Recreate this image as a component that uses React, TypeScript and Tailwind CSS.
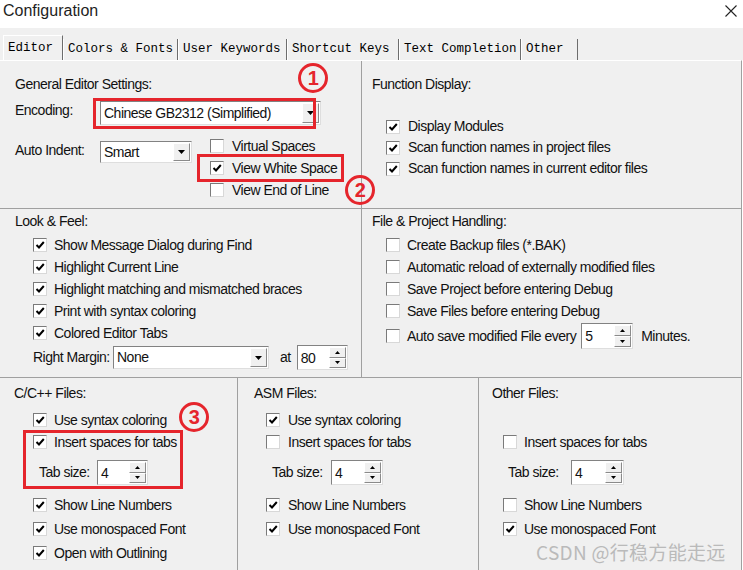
import type { ReactNode } from 'react';

const FONT = "font-['Liberation_Sans',Arial,sans-serif]";

function Box({ checked }: { checked?: boolean }) {
  return (
    <span className="flex h-[14px] w-[14px] shrink-0 items-center justify-center border border-t-[#7a7a7a] border-l-[#7a7a7a] border-b-[#d8d8d8] border-r-[#d8d8d8] bg-white">
      {checked && (
        <svg width="10" height="10" viewBox="0 0 10 10">
          <path d="M1.5 5 L4 7.5 L8.8 2" fill="none" stroke="#000" strokeWidth="2" />
        </svg>
      )}
    </span>
  );
}

function Check({ checked, label, h = 'h-[22px]', gap = 'gap-[7px]' }: { checked?: boolean; label: string; h?: string; gap?: string }) {
  return (
    <div className={`flex items-center ${h} ${gap}`}>
      <Box checked={checked} />
      <span className="whitespace-nowrap">{label}</span>
    </div>
  );
}

function Arrow({ w = 7, h = 4 }: { w?: number; h?: number }) {
  return (
    <svg width={w} height={h} viewBox={`0 0 ${w} ${h}`}>
      <path d={`M0 0 H${w} L${w / 2} ${h} Z`} fill="#000" />
    </svg>
  );
}

function Select({ value, w, h }: { value: string; w: string; h: string }) {
  return (
    <div className={`flex ${w} ${h} items-stretch border border-t-[#828282] border-l-[#828282] border-b-[#dedede] border-r-[#dedede] bg-white p-[1px]`}>
      <span className="flex flex-1 items-center pl-[2px] whitespace-nowrap">{value}</span>
      <span className="flex w-[17px] items-center justify-center border border-t-white border-l-white border-b-[#8a8a8a] border-r-[#8a8a8a] bg-[#f0f0f0]">
        <Arrow />
      </span>
    </div>
  );
}

function Spin({ value, w = 'w-[51px]', h = 'h-[25px]' }: { value: string; w?: string; h?: string }) {
  return (
    <div className={`flex ${w} ${h} border border-t-[#828282] border-l-[#828282] border-b-[#dedede] border-r-[#dedede] bg-white p-[1px]`}>
      <span className="flex flex-1 items-center pl-[2px] leading-none">{value}</span>
      <span className="flex w-[17px] flex-col">
        <span className="flex flex-1 items-center justify-center border border-t-white border-l-white border-b-[#8a8a8a] border-r-[#8a8a8a] bg-[#f0f0f0]">
          <svg width="5" height="3" viewBox="0 0 5 3"><path d="M0 3 H5 L2.5 0 Z" fill="#000" /></svg>
        </span>
        <span className="flex flex-1 items-center justify-center border border-t-white border-l-white border-b-[#8a8a8a] border-r-[#8a8a8a] bg-[#f0f0f0]">
          <Arrow w={5} h={3} />
        </span>
      </span>
    </div>
  );
}

function Label({ children }: { children: ReactNode }) {
  return <div className="h-[17px] leading-[17px] whitespace-nowrap">{children}</div>;
}

function Circle({ n, className }: { n: string; className: string }) {
  return (
    <div className={`absolute flex h-[30px] w-[30px] items-center justify-center rounded-full border-[3px] border-[#e5252c] text-[20px] font-bold leading-none text-[#e5252c] ${className}`}>
      {n}
    </div>
  );
}

const tabs = [
  { t: 'Colors & Fonts', w: 'w-[115px]' },
  { t: 'User Keywords', w: 'w-[109px]' },
  { t: 'Shortcut Keys', w: 'w-[112px]' },
  { t: 'Text Completion', w: 'w-[122px]' },
  { t: 'Other', w: 'w-[57px]' },
];

export default function App() {
  return (
    <div className={`relative h-[570px] w-[743px] overflow-hidden bg-white text-[14px] tracking-[-0.5px] text-[#111] ${FONT}`}>
      {/* title bar */}
      <div className="flex h-[28px] items-start justify-between pl-[3px] pr-[5px] pt-[1px]">
        <span className="text-[16px] leading-[19px] tracking-normal text-[#1e1e1e]">Configuration</span>
        <svg width="12" height="12" viewBox="0 0 12 12" className="mr-[1px] mt-[4px]">
          <path d="M0.5 0.5 L11.5 11.5 M11.5 0.5 L0.5 11.5" stroke="#222" strokeWidth="1.1" />
        </svg>
      </div>

      {/* tabs */}
      <div className="flex h-[32px] items-end bg-[#f0f0f0] pl-[3px] font-['Liberation_Mono',monospace] text-[12.5px] tracking-normal text-black">
        <div className="flex h-[25px] w-[60px] items-start border-l border-t border-r border-l-white border-t-white border-r-[#6d6d6d] pl-[4px] pt-[3px]">Editor</div>
        {tabs.map((x) => (
          <div key={x.t} className={`flex h-[21px] ${x.w} items-center border-l border-r border-l-white border-r-[#6d6d6d] pl-[4px] whitespace-nowrap`}>{x.t}</div>
        ))}
      </div>

      {/* panel */}
      <div className="flex h-[510px] w-[742px] flex-col border-r border-t border-r-[#a0a0a0] border-t-white bg-[#f0f0f0]">
        <div className="flex h-[148px] border-b border-[#a0a0a0]">
          <div className="w-[362px] border-r border-[#a0a0a0] pl-[15px] pt-[15px]">
            <Label>General Editor Settings:</Label>
            <div className="mt-[8px] flex items-start">
              <div className="w-[85px] pt-[1px] leading-[17px]">Encoding:</div>
              <Select value="Chinese GB2312 (Simplified)" w="w-[221px]" h="h-[24px]" />
            </div>
            <div className="mt-[10px] flex items-start">
              <div className="mt-[7px] w-[85px] leading-[17px]">Auto Indent:</div>
              <div className="mt-[6px]"><Select value="Smart" w="w-[92px]" h="h-[22px]" /></div>
              <div className="ml-[18px]">
                <Check label="Virtual Spaces" gap="gap-[8px]" />
                <Check checked label="View White Space" gap="gap-[8px]" />
                <Check label="View End of Line" gap="gap-[8px]" />
              </div>
            </div>
          </div>
          <div className="flex-1 pl-[10px] pt-[15px]">
            <Label>Function Display:</Label>
            <div className="ml-[14px] mt-[23px]">
              <Check checked label="Display Modules" h="h-[21px]" gap="gap-[8px]" />
              <Check checked label="Scan function names in project files" h="h-[21px]" gap="gap-[8px]" />
              <Check checked label="Scan function names in current editor files" h="h-[21px]" gap="gap-[8px]" />
            </div>
          </div>
        </div>

        <div className="flex h-[169px] border-b border-[#a0a0a0]">
          <div className="w-[362px] border-r border-[#a0a0a0] pl-[15px] pt-[4px]">
            <Label>Look &amp; Feel:</Label>
            <div className="ml-[18px] mt-[4px]">
              <Check checked label="Show Message Dialog during Find" />
              <Check checked label="Highlight Current Line" />
              <Check checked label="Highlight matching and mismatched braces" />
              <Check checked label="Print with syntax coloring" />
              <Check checked label="Colored Editor Tabs" />
              <div className="mt-[1px] flex h-[25px] items-center">
                <span className="w-[80px]">Right Margin:</span>
                <Select value="None" w="w-[156px]" h="h-[23px]" />
                <span className="ml-[11px]">at</span>
                <span className="ml-[6px]"><Spin value="80" w="w-[51px]" h="h-[25px]" /></span>
              </div>
            </div>
          </div>
          <div className="flex-1 pl-[10px] pt-[4px]">
            <Label>File &amp; Project Handling:</Label>
            <div className="ml-[14px] mt-[4px]">
              <Check label="Create Backup files (*.BAK)" />
              <Check label="Automatic reload of externally modified files" />
              <Check label="Save Project before entering Debug" />
              <Check label="Save Files before entering Debug" />
              <div className="mt-[1px] flex h-[26px] items-center">
                <Check label="Auto save modified File every" h="h-[26px]" />
                <span className="ml-[5px]"><Spin value="5" w="w-[52px]" h="h-[26px]" /></span>
                <span className="ml-[8px]">Minutes.</span>
              </div>
            </div>
          </div>
        </div>

        <div className="flex flex-1">
          <div className="w-[238px] border-r border-[#a0a0a0] pl-[14px] pt-[7px]">
            <Label>C/C++ Files:</Label>
            <div className="ml-[19px] mt-[7px]">
              <Check checked label="Use syntax coloring" />
              <Check checked label="Insert spaces for tabs" />
              <div className="mt-[7px] flex h-[25px] items-center">
                <span className="ml-[6px] w-[58px]">Tab size:</span>
                <Spin value="4" />
              </div>
              <div className="mt-[8px]">
                <Check checked label="Show Line Numbers" h="h-[24px]" />
                <Check checked label="Use monospaced Font" h="h-[24px]" />
                <Check checked label="Open with Outlining" h="h-[24px]" />
              </div>
            </div>
          </div>
          <div className="w-[241px] border-r border-[#a0a0a0] pl-[16px] pt-[7px]">
            <Label>ASM Files:</Label>
            <div className="ml-[12px] mt-[7px]">
              <Check checked label="Use syntax coloring" gap="gap-[8px]" />
              <Check label="Insert spaces for tabs" gap="gap-[8px]" />
              <div className="mt-[7px] flex h-[25px] items-center">
                <span className="ml-[6px] w-[59px]">Tab size:</span>
                <Spin value="4" w="w-[52px]" />
              </div>
              <div className="mt-[8px]">
                <Check checked label="Show Line Numbers" h="h-[24px]" gap="gap-[8px]" />
                <Check checked label="Use monospaced Font" h="h-[24px]" gap="gap-[8px]" />
              </div>
            </div>
          </div>
          <div className="flex-1 pl-[13px] pt-[7px]">
            <Label>Other Files:</Label>
            <div className="ml-[11px] mt-[7px]">
              <div className="h-[22px]" />
              <Check label="Insert spaces for tabs" />
              <div className="mt-[7px] flex h-[25px] items-center">
                <span className="ml-[5px] w-[63px]">Tab size:</span>
                <Spin value="4" w="w-[53px]" />
              </div>
              <div className="mt-[8px]">
                <Check label="Show Line Numbers" h="h-[24px]" />
                <Check checked label="Use monospaced Font" h="h-[24px]" />
              </div>
            </div>
          </div>
        </div>
      </div>

      {/* annotations */}
      <div className="absolute left-[93px] top-[98px] h-[31px] w-[223px] border-[3px] border-[#e5252c]" />
      <div className="absolute left-[197px] top-[154px] h-[28px] w-[147px] border-[3px] border-[#e5252c]" />
      <div className="absolute left-[23px] top-[430px] h-[59px] w-[160px] border-[3px] border-[#e5252c]" />
      <Circle n="1" className="left-[298px] top-[63px]" />
      <Circle n="2" className="left-[345px] top-[175px]" />
      <Circle n="3" className="left-[179px] top-[402px]" />
      <div className="absolute left-[536px] top-[538px] font-['Noto_Sans_CJK_SC',sans-serif] text-[19px] tracking-[0.3px] text-[#bababa]">CSDN @行稳方能走远</div>
    </div>
  );
}
